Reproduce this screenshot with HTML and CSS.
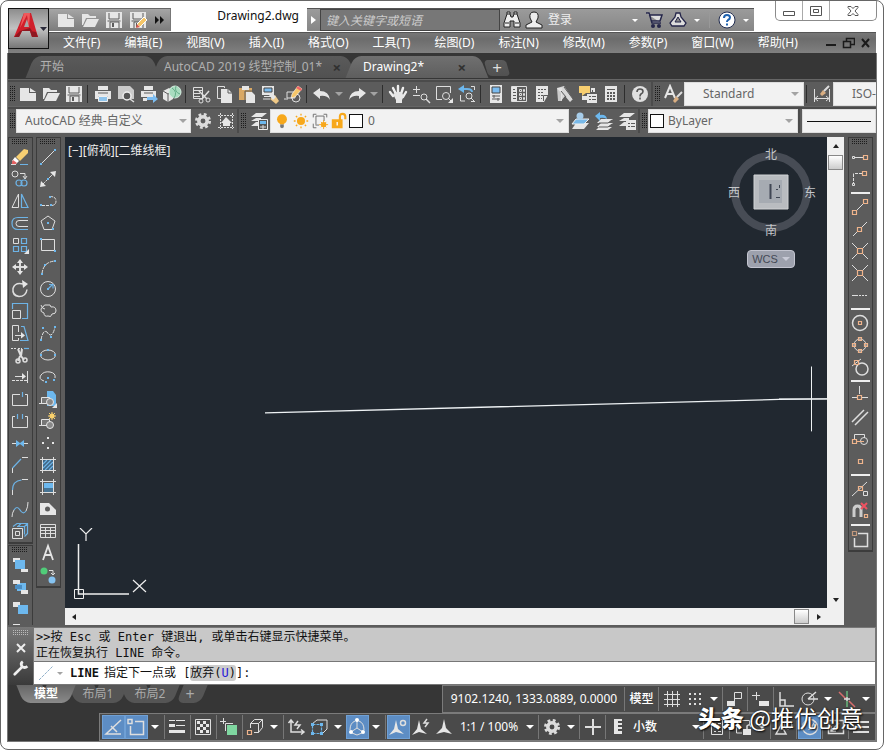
FILE: index.html
```html
<!DOCTYPE html>
<html lang="zh-CN">
<head>
<meta charset="utf-8">
<title>Drawing2.dwg</title>
<link rel="stylesheet" href="styles.css">
</head>
<body>
<svg class="defs" aria-hidden="true">
<defs>
<symbol id="new" viewBox="0 0 20 20"><path class="wf" d="M2 4h9v5h7v8H2z"/><path class="wf" d="M12 4l6 4h-6z"/></symbol>
<symbol id="open" viewBox="0 0 20 20"><path class="wf" d="M2 4h6l2 2h6v2H6L3 15H2z"/><path class="wf" d="M7 9h12l-4 8H3z"/></symbol>
<symbol id="save" viewBox="0 0 20 20"><path class="wf" d="M2 2h16v16H2z"/><path class="k" d="M5 3v6h10V3M3.500 11h13M6 18v-6h9v6"/><path class="kf" d="M8 13h2v4H8z"/></symbol>
<symbol id="saveas" viewBox="0 0 20 20"><use href="#save"/><path fill="#f5c669" stroke="#fff" d="M16 7l3 3-7 7-3-3z"/><path fill="#db5b4c" d="M9 14l3 3-4 1z"/></symbol>
<symbol id="more" viewBox="0 0 20 20"><path fill="#111" d="M6 6l4 4-4 4zM11 6l4 4-4 4z"/></symbol>
<symbol id="print" viewBox="0 0 20 20"><path class="wf" d="M5 2h10v4H5zM2 7h16v8h-3v-3H5v3H2z"/><path fill="#8fc4ec" stroke="#eee" d="M5.500 12.500h9v5h-9z"/><path class="k" d="M5 9h10"/></symbol>
<symbol id="preview" viewBox="0 0 20 20"><path class="wf" opacity=".8" d="M2 2h12l4 4v9H2z"/><circle cx="11" cy="12" r="4" fill="#555" stroke="#eee" stroke-width="1.500"/><path class="w15" d="M14 15l4 3"/></symbol>
<symbol id="plot" viewBox="0 0 20 20"><path class="wf" d="M5 2h9v4H5zM2 7h15v6H2zM4 14h4v3H4z"/><path class="k" d="M5 9h9"/><path fill="#7bbcf0" d="M8 13h6v-3l5 5-5 4v-3H8z"/></symbol>
<symbol id="share" viewBox="0 0 20 20"><path class="wf" d="M1 7l6-3 4 3v8l-5 3-5-3z"/><path class="k" d="M1 7l5 3 5-3M6 10v8"/><circle cx="13" cy="8" r="6" fill="#a9dcc0" stroke="#d8eee2"/><path d="M10 4q6 4 2 10M14 2q-2 6 4 8" fill="none" stroke="#64ad88"/></symbol>
<symbol id="cut" viewBox="0 0 20 20"><path class="w" d="M2.500 3.500h9v11h-9zM3 6.500h8M3 9.500h6M3 12.500h6"/><path class="w15" d="M8 7l8 8M18 7l-7 8"/><circle class="w" cx="17" cy="16" r="2"/><circle class="w" cx="10" cy="17" r="2"/></symbol>
<symbol id="copy" viewBox="0 0 20 20"><path class="w" d="M7 14.500H3.500v-12h7V4"/><path class="wf" d="M7 5h7l4 4v10H7z"/><path class="k" d="M14 5v4h4"/></symbol>
<symbol id="paste" viewBox="0 0 20 20"><path fill="#d9a864" d="M2 4h13v12H2z"/><path class="wf" d="M5 2h7v4H5zM9 8h6l3 3v8H9z"/><path class="k" d="M8 18V7h7"/></symbol>
<symbol id="match" viewBox="0 0 20 20"><path class="wf" d="M2 2h12v9H2z"/><path fill="#7bbcf0" stroke="#444" d="M4 4h8v4H4z"/><path class="wf" d="M4 12h7v1H4z"/><path class="w" d="M3 15h7"/><path fill="#f0c987" d="M10 15l5-4 4 6-3 3z"/><path class="wf" d="M9 11l3-2 4 4-3 3z"/></symbol>
<symbol id="blockedit" viewBox="0 0 20 20"><path class="w" d="M4 8h8v6H4zM1 15h4"/><circle class="w" cx="13" cy="14" r="4"/><path fill="#f5c669" stroke="#fff" stroke-width=".6" d="M15 2l4 3-7 8-4 1 1-4z"/><path fill="#e66" d="M15 2l4 3-1 2-5-3z"/></symbol>
<symbol id="undo" viewBox="0 0 20 20"><path class="wf" d="M1 9l7-5v3q9 0 10 9-3-5-10-4v3z"/></symbol>
<symbol id="redo" viewBox="0 0 20 20"><path class="wf" d="M19 9l-7-5v3Q3 7 2 16q3-5 10-4v3z"/></symbol>
<symbol id="pan" viewBox="0 0 20 20"><path d="M5 12L2 8M8 10L5 4M10 9V2M13 10l2-6M15 13l3-5" fill="none" stroke="#eee" stroke-width="2.400" stroke-linecap="round"/><path class="wf" d="M5 10l4-2h4l3 4-2 4v3H8v-3z"/></symbol>
<symbol id="zoom" viewBox="0 0 20 20"><path class="w" d="M2 5.500h7M5.500 2v7M2 11.500h7"/><circle class="w" cx="13" cy="13" r="3"/><path class="w15" d="M15 15l4 4"/></symbol>
<symbol id="zoomwin" viewBox="0 0 20 20"><path class="w" d="M8 15.500H2.500v-13h14V9"/><circle class="w" cx="12" cy="12" r="3.500"/><path class="w" d="M14 14l3 3"/><path class="wf" d="M19 14v5h-5z"/></symbol>
<symbol id="zoomprev" viewBox="0 0 20 20"><path class="b2" d="M3 5h7q5 0 5 3"/><path class="bf" d="M1 5l6-4v8z"/><path class="w" d="M14 2.500h3.500V6M3.500 11v6H8M14 17.500h4"/><circle class="w" cx="12" cy="12" r="3"/><path class="w" d="M14 14l4 4"/></symbol>
<symbol id="props" viewBox="0 0 20 20"><path class="wf" d="M4 1h12v18H4z"/><path fill="#7bbcf0" stroke="#444" d="M6 3h8v6H6z"/><path class="k" d="M6 12h8M6 15h8M8 11v3M12 14v3"/></symbol>
<symbol id="dcenter" viewBox="0 0 20 20"><path class="w" d="M2.500 2.500h15v15h-15z"/><path class="wf" d="M3 3h5v14H3z"/><path class="k" d="M4 5.500h2M4 8.500h3M4 11.500h3M4 14.500h3"/><path class="w" d="M10.500 5.500h2v2h-2zM14.500 5.500h1v2h-1zM10.500 9.500h2v2h-2zM14.500 9.500h1v2h-1zM10.500 13.500h2v2h-2zM14.500 13.500h1v2h-1z"/></symbol>
<symbol id="palette" viewBox="0 0 20 20"><path class="wf" d="M4 2h12v9l-4 7H4z"/><path class="k" stroke-dasharray="2 1" d="M6 5.500h8M6 8.500h5M6 11.500h5M6 14.500h4"/><path class="k" d="M11.500 17V11.500H16"/></symbol>
<symbol id="sheets" viewBox="0 0 20 20"><path class="wf" d="M2 4l7-2 9 13-3 3-5-6-4 5V9z" opacity=".9"/><path class="wf" d="M2 4h5v13H3z" opacity=".8"/><path class="k" d="M9 3l9 12M6 7l5 6"/></symbol>
<symbol id="markup" viewBox="0 0 20 20"><path fill="#f7ce70" d="M1 2h11v7H8l-4 3V9H1z"/><path class="wf" d="M13 4h4v4h-4zM4 12h5v4H4zM9 10h10v9H9z"/><path class="k" d="M11 12.500h2M14 12.500h4M11 15.500h2M14 15.500h4M14.500 9v-3"/></symbol>
<symbol id="calc" viewBox="0 0 20 20"><path class="wf" d="M4 2h12v16H4z"/><path class="k" d="M6 5.500h8"/><path class="k" stroke-width="2" stroke-dasharray="2 1" d="M6 9h8M6 12h8M6 15h8"/></symbol>
<symbol id="help" viewBox="0 0 20 20"><circle cx="10" cy="10" r="8" fill="#e0e0e0"/><path d="M7 8q0-3 3-3t3 2.500q0 1.500-2 2.500-1 .7-1 2.500M10 13.500v2" fill="none" stroke="#555" stroke-width="1.600"/></symbol>
<symbol id="textstyle" viewBox="0 0 20 20"><path d="M2 14L7 2l5 12M4 10h6" fill="none" stroke="#e5e5e5" stroke-width="2"/><path fill="#d9ae82" d="M10 17l3-5 3 3-4 4z"/><path class="w2" d="M14 13l5-5"/></symbol>
<symbol id="dimstyle" viewBox="0 0 20 20"><path class="w" d="M2.500 5v13M17.500 5v13M3 14.500h14M6 12l-3 2.500 3 2.500M14 12l3 2.500-3 2.500"/><path fill="#d9ae82" d="M8 10l3-4 3 3-4 3z"/><path class="w2" d="M12 7l5-5"/></symbol>
<symbol id="gear" viewBox="0 0 20 20"><circle cx="10" cy="10" r="6.500" fill="none" stroke="#dcdcdc" stroke-width="3" stroke-dasharray="2.700 2.400"/><circle cx="10" cy="10" r="4.200" fill="none" stroke="#dcdcdc" stroke-width="3.500"/></symbol>
<symbol id="myws" viewBox="0 0 20 20"><path class="w" stroke-dasharray="2 1" d="M2 4.500h16M2 16.500h16M4.500 2v16M16.500 2v16"/><path class="wf" d="M5 12l5-6 6 6h-2v3H7v-3z"/></symbol>
<symbol id="layers" viewBox="0 0 20 20"><path class="wf" d="M7 2h11l-5 4H2zM7 7h5v3H2zM7 11h3v4H2z"/><path fill="#555" stroke="#eee" d="M9.500 8.500h9v10h-9z"/><path class="bf" d="M11 10h6v3h-6z"/><path class="w" d="M11 16h6M14 14v4"/></symbol>
<symbol id="bulb" viewBox="0 0 20 20"><circle cx="10" cy="8" r="5.500" fill="#f7a81b"/><path fill="#f7a81b" d="M7 11h6l-1 3H8z"/><path fill="#777" d="M8 14h4v3l-2 1-2-1z"/></symbol>
<symbol id="sun" viewBox="0 0 20 20"><circle cx="10" cy="10" r="4.500" fill="#f7a81b"/><path stroke="#f7a81b" stroke-width="1.500" d="M10 2v2M10 16v2M2 10h2M16 10h2M4.300 4.300l1.500 1.500M14.200 14.200l1.500 1.500M4.300 15.700l1.500-1.500M14.200 5.800l1.500-1.500"/></symbol>
<symbol id="vpfreeze" viewBox="0 0 20 20"><path fill="none" stroke="#666" d="M5.500 14V4.500h9V10M5 14.500h4M2.500 6V2.500H6M14 2.500h3.500V6M2.500 13v4.500H6"/><circle cx="14" cy="14" r="3" fill="#f7a81b"/><path stroke="#f7a81b" d="M14 9v10M9 14h10M11 11l6 6M17 11l-6 6"/></symbol>
<symbol id="lock" viewBox="0 0 20 20"><path fill="#f7a81b" d="M2 8h12v10H2z"/><path fill="none" stroke="#f7a81b" stroke-width="2.400" d="M11 9V5q0-3 3-3t3 3v3"/><path stroke="#fff" stroke-width="1.500" d="M8 11v4"/></symbol>
<symbol id="laycur" viewBox="0 0 20 20"><path class="wf" d="M5 12h13l-5 6H1z"/><path fill="#79b9e8" stroke="#eee" d="M5 8h13l-5 5H1z"/><circle cx="9" cy="5" r="3.500" fill="#a7cdea"/></symbol>
<symbol id="layprev" viewBox="0 0 20 20"><path class="wf" d="M7 8h12l-5 4H3zM7 12h12l-5 4H3zM5 16h13l-4 3H2z"/><path class="k" d="M5 12h9l4-3M5 16h9l4-3"/><path class="bf" d="M1 5l5-4v3q6-1 7 4-4-2-7-1v3z"/></symbol>
<symbol id="laystate" viewBox="0 0 20 20"><path class="wf" d="M7 2h11l-5 4H2zM7 7h5v3H2zM7 11h3v4H2zM9 9h10v10H9z"/><path class="k" d="M11 12.500h2M14 12.500h4M11 15.500h2M14 15.500h4"/></symbol>
<symbol id="erase" viewBox="0 0 20 20"><path class="b" d="M10 17.500h8"/><path fill="#fff" d="M5 10l4 4-3 3-4-3z"/><path fill="#f7cf72" d="M14 2l4 1v3l-8 8-4-4z"/><path fill="#e46162" d="M3 13l4 3-3 2H2v-3z"/><path class="w" d="M1 17.500h5"/></symbol>
<symbol id="mcopy" viewBox="0 0 20 20"><circle class="w" cx="5" cy="5" r="3"/><path class="w" d="M10 4.500h5V9M13 7l2 3 2-3"/><circle class="b" cx="9" cy="14" r="3"/><circle class="b" cx="14" cy="14" r="3"/></symbol>
<symbol id="mirror" viewBox="0 0 20 20"><path class="w" d="M8.500 3v13.500H2z"/><path class="b" d="M11.500 3v13.500H18z"/></symbol>
<symbol id="offset" viewBox="0 0 20 20"><path class="b" d="M18 4.500H8q-6 0-6 6t6 6h10"/><path class="w" d="M18 7.500H9q-3 0-3 3t3 3h9"/></symbol>
<symbol id="array" viewBox="0 0 20 20"><path class="w" d="M3.500 3.500h5v5h-5z"/><path class="b" d="M11.500 3.500h5v5h-5zM3.500 11.500h5v5h-5zM11.500 11.500h5v5h-5z"/><path class="wf" d="M19 14v5h-5z"/></symbol>
<symbol id="move" viewBox="0 0 20 20"><path class="w2" d="M10 4v12M4 10h12"/><path class="wf" d="M10 2l3 4H7zM10 18l3-4H7zM2 10l4-3v6zM18 10l-4-3v6z"/></symbol>
<symbol id="rotate" viewBox="0 0 20 20"><path class="w15" d="M13 5Q5 3 3 9.500q-1 7 6 8 7 0 8-7"/><path class="wf" d="M12 1l6 4-5 4z"/></symbol>
<symbol id="scale" viewBox="0 0 20 20"><path class="b" d="M2.500 8V2.500h15v15H12"/><path class="w" d="M2.500 9.500h8v8h-8z"/></symbol>
<symbol id="stretch" viewBox="0 0 20 20"><path class="w" d="M8.500 9V2.500h-6v15h6V15M5 12.500h7"/><path class="wf" d="M11 9l4 3.500-4 3z"/><path class="b" d="M11 3.500h3l4 14H10"/></symbol>
<symbol id="trim" viewBox="0 0 20 20"><path class="w" d="M1 3.500h5M8 3.500h4" stroke-dasharray="2 1"/><path class="b" d="M14 3.500h5"/><path class="w2" d="M8 4l3 7M12 4l-1 7 3 4M10 11l-2 5"/><circle class="w15" cx="15" cy="15" r="2"/><circle class="w15" cx="8" cy="16" r="2"/></symbol>
<symbol id="extend" viewBox="0 0 20 20"><path class="w" d="M17.500 4v12M5 9.500h9"/><path class="wf" d="M12 6l4 3.500-4 3z"/><path class="w" stroke-dasharray="3 1" d="M2 13.500h15"/></symbol>
<symbol id="breakpt" viewBox="0 0 20 20"><path class="w" d="M10 5.500H2.500v11h15v-11H15"/><path class="b" d="M12.500 3v5"/></symbol>
<symbol id="break" viewBox="0 0 20 20"><path class="w" d="M5 5.500H2.500v11h15v-11H15"/><path class="b" d="M7.500 3v5M12.500 3v5"/></symbol>
<symbol id="join" viewBox="0 0 20 20"><path class="w" d="M2 10.500h4M14 10.500h4"/><path class="bf" d="M6 7l4 3 4-3v7l-4-3-4 3z"/></symbol>
<symbol id="chamfer" viewBox="0 0 20 20"><path class="w" d="M2.500 18v-5M12 2.500h6"/><path class="b" d="M2.500 13L11 4"/></symbol>
<symbol id="fillet" viewBox="0 0 20 20"><path class="w" d="M2.500 18v-5M12 2.500h6"/><path class="b" d="M2.500 13q0-9 9-10"/></symbol>
<symbol id="blend" viewBox="0 0 20 20"><path class="w" d="M2 18q0-4 2-7M18 3q0 5-2 9"/><path class="b" d="M4 11q3-5 6 0t6 1"/></symbol>
<symbol id="explode" viewBox="0 0 20 20"><path class="w" d="M2.500 7.500h10v10h-10z"/><path class="w" d="M5.500 10.500h4v4h-4z"/><path class="b" d="M3 5.500l4-3h10.500v10l-3 3M7 5.500h8M14.500 5.500v8M14.500 5.500l3-3M8 5.500l3-3"/></symbol>
<symbol id="ord1" viewBox="0 0 20 20"><path class="wf" d="M3 3h7v4H3zM11 14h7v3h-7z"/><path class="bf" d="M5 5h10v9H5z"/></symbol>
<symbol id="ord2" viewBox="0 0 20 20"><path class="bf" d="M7 6h9v8H7z"/><path class="wf" d="M3 3h7v4H3zM11 13h7v4h-7z"/><path fill="#4a8dc3" d="M5 8h7v4H5z"/></symbol>
<symbol id="ord3" viewBox="0 0 20 20"><path class="wf" d="M3 3h7v5H3z"/><path class="bf" d="M8 6h10v9H8z"/></symbol>
<symbol id="line" viewBox="0 0 20 20"><path class="w" d="M3 17L17 3"/><path class="bf" d="M2 16h2v2H2zM16 2h2v2h-2z"/></symbol>
<symbol id="xline" viewBox="0 0 20 20"><path class="w" stroke-dasharray="4 1" d="M4 16L16 4"/><path class="wf" d="M2 18l1-6 5 5zM18 2l-6 1 5 5z"/><path class="bf" d="M9 9h2v2H9z"/></symbol>
<symbol id="pline" viewBox="0 0 20 20"><path class="w" stroke-dasharray="3 1" d="M4 14.500h8M12 5.500q6 0 6 4.500t-5 4.500"/><path class="bf" d="M2 13h2v2H2zM12 13h2v2h-2zM11 5h2v2h-2z"/></symbol>
<symbol id="polygon" viewBox="0 0 20 20"><path class="w" d="M10 3l7 5-3 8.500H6L3 8z"/><path class="bf" d="M9 9h2v2H9zM14 15h2v2h-2z"/></symbol>
<symbol id="rect" viewBox="0 0 20 20"><path class="w" d="M3.500 4.500h13v11h-13z"/><path class="bf" d="M2 3h2v2H2zM16 15h2v2h-2z"/></symbol>
<symbol id="arc" viewBox="0 0 20 20"><path class="w" stroke-dasharray="4 1" d="M4 17Q5 5 17 4"/><path class="bf" d="M3 16h2v2H3zM6 7h2v2H6zM16 3h2v2h-2z"/></symbol>
<symbol id="circle" viewBox="0 0 20 20"><circle class="w" cx="10" cy="10" r="7.500"/><path class="b" d="M10 10l4-4M11 5.500h4v4"/><path class="bf" d="M9 9h2v2H9z"/></symbol>
<symbol id="cloud" viewBox="0 0 20 20"><path class="w" d="M5 6q1-3 4-2 4-1 4 2 5-1 5 4 0 3-4 3-1 4-4 2-4 1-4-3-4-1-3-4 1-2 2-2zM3 4q1 4 4 4"/></symbol>
<symbol id="spline" viewBox="0 0 20 20"><path class="w" stroke-dasharray="4 1" d="M3 17q2-11 6-8 5 8 8-5"/><path class="bf" d="M2 16h2v2H2zM4 4h2v2H4zM12 13h2v2h-2zM16 3h2v2h-2z"/></symbol>
<symbol id="ellipse" viewBox="0 0 20 20"><ellipse class="w" cx="10" cy="10" rx="7.500" ry="5"/><path class="bf" d="M2 9h2v2H2zM9 4h2v2H9zM16 9h2v2h-2z"/></symbol>
<symbol id="earc" viewBox="0 0 20 20"><path class="w" d="M6 14q-6-2-3-6t9-3q6 1 5 6"/><path class="bf" d="M9 10h2v2H9zM7 14h2v2H7zM15 12h2v2h-2z"/></symbol>
<symbol id="insert" viewBox="0 0 20 20"><path class="bf" d="M9 2h6l3 4v11H9z"/><path fill="#777" stroke="#e5e5e5" d="M3.500 8.500h8v6h-8z"/><circle cx="12" cy="13" r="3.500" fill="#888" stroke="#e5e5e5"/><path class="w" d="M1 14.500h4"/><path class="wf" d="M19 14v5h-5z"/></symbol>
<symbol id="block" viewBox="0 0 20 20"><path fill="#777" stroke="#e5e5e5" d="M3.500 8.500h8v6h-8z"/><circle cx="12" cy="14" r="3.500" fill="#888" stroke="#e5e5e5"/><path class="w" d="M1 14.500h4"/><circle cx="14" cy="5" r="2.500" fill="#f9d16c"/><path stroke="#f9d16c" d="M14 1v8M10 5h8M11 2l6 6M17 2l-6 6"/></symbol>
<symbol id="point" viewBox="0 0 20 20"><path class="wf" d="M9 4h2v2H9zM4 9h2v2H4zM14 9h2v2h-2zM9 14h2v2H9z"/></symbol>
<symbol id="hatch" viewBox="0 0 20 20"><path fill="#3f6584" d="M5 5h10v10H5z"/><path class="b" d="M5 9l4-4M5 13l8-8M7 15l8-8M11 15l4-4"/><path class="w" d="M2 4.500h16M2 15.500h16M4.500 2v16M15.500 2v16"/></symbol>
<symbol id="gradient" viewBox="0 0 20 20"><path class="bf" d="M6 6h9v6H6z"/><path fill="#477494" d="M6 11h9v4H6z"/><path class="w" d="M2 4.500h16M2 15.500h16M4.500 2v16M15.500 2v16"/></symbol>
<symbol id="region" viewBox="0 0 20 20"><path class="wf" fill-rule="evenodd" d="M2 4h9l7 7v5H2zM7 10a2.500 2.500 0 1 0 5 0 2.500 2.500 0 1 0-5 0z"/></symbol>
<symbol id="table" viewBox="0 0 20 20"><path class="w" d="M2.500 3.500h15v13h-15zM3 6.500h14M3 9.500h14M3 12.500h14M7.500 7v9M12.500 7v9"/></symbol>
<symbol id="mtext" viewBox="0 0 20 20"><path d="M5 17l5-14 5 14M7 12h6" fill="none" stroke="#e5e5e5" stroke-width="1.800"/></symbol>
<symbol id="addsel" viewBox="0 0 20 20"><circle cx="6" cy="6" r="3.500" fill="#50cc79"/><circle cx="14" cy="15" r="3.500" fill="#86c3f1"/><path class="w" d="M11 5.500h4V9M13 8l2 2 2-2"/></symbol>
<symbol id="s1" viewBox="0 0 20 20"><path class="w" d="M5 10.500h8M2.500 9.500h2v2h-2z"/><path class="o" d="M13.500 8.500h4v4h-4z"/></symbol>
<symbol id="s2" viewBox="0 0 20 20"><path class="w" d="M12 4.500H3.500M3.500 5v9" stroke-dasharray="3 1"/><path class="w" d="M2.500 14.500h2v2h-2z"/><path class="o" d="M12.500 2.500h4v4h-4z"/></symbol>
<symbol id="s3" viewBox="0 0 20 20"><path class="w" d="M7 13l6-6"/><path class="o" d="M2.500 13.500h4v4h-4zM13.500 2.500h4v4h-4z"/></symbol>
<symbol id="s4" viewBox="0 0 20 20"><path class="w" d="M3 17l5-5M12 8l5-5"/><path class="o" d="M7.500 8.500h4v4h-4z"/></symbol>
<symbol id="s5" viewBox="0 0 20 20"><path class="w" d="M2 18l6-6M12 8l6-6M2 2l6 6M12 12l6 6"/><path class="o" d="M7.500 7.500h5v5h-5z"/></symbol>
<symbol id="s6" viewBox="0 0 20 20"><path class="w" d="M2 10.500h6"/><path class="w" stroke-dasharray="2 1" d="M9 10.500h9"/></symbol>
<symbol id="s7" viewBox="0 0 20 20"><circle class="w15" cx="10" cy="10" r="7.500"/><path class="o" d="M8.500 8.500h3v3h-3z"/></symbol>
<symbol id="s8" viewBox="0 0 20 20"><circle class="w" cx="10" cy="10" r="6"/><path class="o" d="M8.500 2.500h3v3h-3zM8.500 14.500h3v3h-3zM2.500 8.500h3v3h-3zM14.500 8.500h3v3h-3z"/></symbol>
<symbol id="s9" viewBox="0 0 20 20"><circle class="w15" cx="12" cy="12" r="6"/><path class="w" d="M2 9l9-7"/><path class="o" d="M4.500 3.500h4v4h-4z"/></symbol>
<symbol id="s10" viewBox="0 0 20 20"><path class="w" d="M9.500 1v8M2 12.500h5M12 12.500h6"/><path class="o" d="M7.500 10.500h4v4h-4z"/></symbol>
<symbol id="s11" viewBox="0 0 20 20"><path class="w15" d="M2 15L14 3M5 18L18 5"/></symbol>
<symbol id="s12" viewBox="0 0 20 20"><path class="w" d="M4.500 10V5.500h10V9"/><circle class="w" cx="14" cy="12" r="3.500"/><path class="o" d="M2.500 10.500h4v4h-4zM7 12.500h7"/></symbol>
<symbol id="s13" viewBox="0 0 20 20"><path class="o" d="M8.500 8.500h4v4h-4z"/></symbol>
<symbol id="s14" viewBox="0 0 20 20"><path class="w" d="M2 17L17 3M13.500 12.500h4v4h-4z"/><path class="o" d="M8.500 7.500h4v4h-4z"/></symbol>
<symbol id="s15" viewBox="0 0 20 20"><path d="M4 16V9q0-4 3.500-4T11 9v7" fill="none" stroke="#ccc" stroke-width="3"/><path stroke="#ef5261" stroke-width="2" d="M11 2l6 6M17 2l-6 6"/><path class="o" d="M14.500 13.500h3v3h-3z"/></symbol>
<symbol id="s16" viewBox="0 0 20 20"><path class="w15" d="M8 4.500h9.500v13h-13V9"/><path class="o" opacity=".7" d="M2.500 2.500h4v4h-4z"/></symbol>
<symbol id="infer" viewBox="0 0 20 20"><path class="w15" d="M18 3L3 17h15M8 9l6 6"/></symbol>
<symbol id="osnap" viewBox="0 0 20 20"><path class="w15" d="M9 4.500h8.500v13h-13V9"/><path class="w15" d="M2 2.500h4v4H2z"/></symbol>
<symbol id="lweight" viewBox="0 0 20 20"><path class="wf" d="M2 3h6v1H2zM9 3h9v1H9zM2 7h6v3H2zM9 8h9v1H9zM2 13h16v3H2z"/></symbol>
<symbol id="transp" viewBox="0 0 20 20"><path class="w" d="M2.500 2.500h15v15h-15z"/><path class="wf" d="M4 4h3v3H4zM10 4h3v3h-3zM7 7h3v3H7zM13 7h3v3h-3zM4 10h3v3H4zM10 10h3v3h-3zM7 13h3v3H7zM13 13h3v3h-3z"/></symbol>
<symbol id="selcyc" viewBox="0 0 20 20"><path class="w" d="M1 4.500h6M4.500 1v6"/><path fill="#7fd6a0" d="M8 8h10v10H8z"/><path class="w" d="M6.500 14V6.500H14"/></symbol>
<symbol id="box3d" viewBox="0 0 20 20"><path class="w" d="M5.500 11V6.500l4-4h8v8l-4 5H9M5.500 6.500h8v9M13.500 6.500l4-4"/><path class="o" d="M2.500 13.500h4v4h-4z"/></symbol>
<symbol id="ducs" viewBox="0 0 20 20"><path class="w15" d="M5 3v12h13M2.500 6L5 3l2.500 3M15 12.500l3 2.500-3 2.500M12 4l-3 4h5l-3 4"/></symbol>
<symbol id="filter" viewBox="0 0 20 20"><path class="w" d="M3 7l5-4h10v9l-5 5"/><path class="b" stroke-dasharray="3 1" d="M3.500 7.500h9v9h-9z"/><path class="bf" d="M2 6h3v3H2zM11 6h3v3h-3zM2 15h3v3H2zM11 15h3v3h-3z"/></symbol>
<symbol id="gizmo" viewBox="0 0 20 20"><path class="w" d="M10 3v8l-6 4M10 11l6 4M8 4Q3 6 3 13M12 4q5 2 5 9M5 16l5 2 5-2"/><circle cx="10" cy="3" r="2" fill="#fff"/><circle cx="4" cy="15" r="2" fill="#fff"/><circle cx="16" cy="15" r="2" fill="#fff"/></symbol>
<symbol id="annovis" viewBox="0 0 20 20"><path class="wf" d="M8 3l2 9 6 5-8-2-7 3 5-6z"/><circle class="w15" cx="15" cy="6" r="2.500"/></symbol>
<symbol id="annoauto" viewBox="0 0 20 20"><path class="wf" d="M8 3l2 9 6 5-8-2-7 3 5-6z"/><path class="w15" d="M16 2l-3 4h4l-3 4"/></symbol>
<symbol id="anno" viewBox="0 0 20 20"><path class="wf" d="M10 2l2 9 6 6-8-2-8 2 6-6z"/></symbol>
<symbol id="plus" viewBox="0 0 20 20"><path class="w2" d="M10 2v16M2 10h16"/></symbol>
<symbol id="ruler" viewBox="0 0 20 20"><path class="wf" d="M6 2h8v2h-4v2h4v2h-4v2h4v2h-4v2h4v3H6z"/></symbol>
<symbol id="qprops" viewBox="0 0 20 20"><path class="w" d="M4.500 2.500h11v15h-11zM7 6.500h2M11 6.500h3M7 10.500h2M11 10.500h3M7 14.500h2M11 14.500h3"/></symbol>
<symbol id="uilock" viewBox="0 0 20 20"><path class="w" d="M3.500 3.500h13V8M3.500 4v12H9"/><path class="wf" d="M10 12h8v6h-8z"/><path class="w15" d="M14 12V9q3-3 4 1"/></symbol>
<symbol id="isolate" viewBox="0 0 20 20"><path class="w15" d="M2 17l5-9 5 9z"/><circle class="w" cx="14" cy="8" r="4"/></symbol>
<symbol id="hwacc" viewBox="0 0 20 20"><circle class="w15" cx="10" cy="10" r="7.500"/><path class="wf" d="M15 4l-3 9H8z"/></symbol>
<symbol id="clean" viewBox="0 0 20 20"><path class="w15" d="M2.500 3.500h15v13h-15zM5 14l8-8M5 9v5h5"/></symbol>
<symbol id="menu" viewBox="0 0 20 20"><path class="w2" d="M2 5h16M2 10h16M2 15h16"/></symbol>
<symbol id="grid" viewBox="0 0 20 20"><path class="w" d="M5.500 2v16M10.500 2v16M15.500 2v16M2 5.500h16M2 10.500h16M2 15.500h16"/></symbol>
<symbol id="snap" viewBox="0 0 20 20"><path class="w2" stroke-dasharray="2 3" d="M4 5h12M4 10h12M4 15h12"/></symbol>
<symbol id="dyn" viewBox="0 0 20 20"><path class="w" d="M9.500 17V3.500h7v6h-7"/><path class="wf" d="M2 12h7v5H2z"/></symbol>
<symbol id="dinput" viewBox="0 0 20 20"><path class="w" d="M2 6.500h8M6.500 3v8"/><path class="wf" d="M9 12h10v5H9z"/></symbol>
<symbol id="ortho" viewBox="0 0 20 20"><path class="w15" d="M4 3v14h14M4 11h5v6"/></symbol>
<symbol id="polar" viewBox="0 0 20 20"><circle class="w" cx="9" cy="10" r="6"/><path class="w15" d="M9 10l8-7M9 10h10"/></symbol>
<symbol id="iso" viewBox="0 0 20 20"><path stroke="#d56d6d" stroke-width="1.500" d="M2 3l7 7M12 12l6 6"/><path stroke="#68b77c" stroke-width="1.500" d="M10 2v6M10 12v6"/><path class="w15" d="M7 10h6M10 8v4"/></symbol>
<symbol id="find" viewBox="0 0 20 20"><path fill="#eee" stroke="#222" d="M5 4h3l1 3h2l1-3h3l3 9v4h-6v-6H8v6H2v-4zM5 4V2h3v2M12 4V2h3v2M3 13h4M13 13h4"/></symbol>
<symbol id="user" viewBox="0 0 20 20"><path fill="#eee" stroke="#222" d="M10 2q5 0 4 6l-2 4 6 3v3H2v-3l6-3-2-4Q5 2 10 2z"/></symbol>
<symbol id="cart" viewBox="0 0 20 20"><path fill="#ddd" stroke="#25264a" stroke-width="1.500" d="M2 3h3l3 10h9M6 5h12l-2 6H8"/><circle cx="9" cy="16" r="2" fill="#25264a"/><circle cx="15" cy="16" r="2" fill="#25264a"/></symbol>
<symbol id="a360" viewBox="0 0 20 20"><path fill="#ddd" stroke="#25264a" stroke-width="1.300" d="M8 3h4l1 4 5 6-2 3H4l-2-3 5-6z"/><path fill="#8a8a8a" stroke="#25264a" d="M10 7l-3 5h6z"/></symbol>
<symbol id="helpblue" viewBox="0 0 20 20"><circle cx="10" cy="10" r="8" fill="#fff" stroke="#222d50"/><path d="M7 8q0-3 3-3t3 2.500q0 1.500-2 2.500-1 .7-1 2M10 13.500v2" fill="none" stroke="#2062ae" stroke-width="2"/></symbol>
<symbol id="wrench" viewBox="0 0 20 20"><path d="M3 17l8-8" fill="none" stroke="#eee" stroke-width="3" stroke-linecap="round"/><path d="M12 3q-3 2-1 5 3 3 6 0" fill="none" stroke="#eee" stroke-width="3"/></symbol>
</defs>
</svg>
<div class="frame">
  <div class="winbtns">
    <button aria-label="最小化"><svg width="16" height="12"><path d="M2.500 6.500h11v4h-11z" fill="#fff" stroke="#555"/></svg></button>
    <button aria-label="最大化"><svg width="14" height="12"><path d="M1.500 1.500h11v9h-11zM4.500 4.500h5v3h-5z" fill="#fff" stroke="#555"/></svg></button>
    <button aria-label="关闭" class="wide"><svg width="14" height="12"><path d="M2 1.500h3l2 2 2-2h3v1L9 6l3 3.500v1H9l-2-2-2 2H2v-1L5 6 2 2.500z" fill="#fff" stroke="#555"/></svg></button>
  </div>
  <header class="head">
    <button class="appbtn" aria-label="应用程序菜单"><svg width="38" height="38" viewBox="0 0 38 38"><path fill="#d01f2b" d="M4 27L14 3h7l7 24h-6l-2-6h-8l-3 6z"/><path fill="#f0595c" d="M14 3l-4 15 7-13 2 13 1-15z"/><path fill="#8f1720" d="M4 27l6-6 10-3 2 3H12l-3 6zM20 21l6 1 2 5h-6z"/><path fill="#aaa" d="M14 17l3-8 2 8z"/><path fill="#2a2a3a" d="M30 17h7l-3.500 4z"/></svg></button>
    <div class="title">
      <div class="qat">
        <button aria-label="新建"><svg class="ic"><use href="#new"/></svg></button>
        <button aria-label="打开"><svg class="ic"><use href="#open"/></svg></button>
        <button aria-label="保存"><svg class="ic"><use href="#save"/></svg></button>
        <button aria-label="另存为"><svg class="ic"><use href="#saveas"/></svg></button>
        <button aria-label="更多"><svg class="ic"><use href="#more"/></svg></button>
      </div>
      <h1>Drawing2.dwg</h1>
      <div class="info">
        <button class="exp" aria-label="展开"><i class="car right"></i></button>
        <input type="text" class="search" placeholder="键入关键字或短语" aria-label="搜索">
        <button aria-label="查找"><svg class="ic"><use href="#find"/></svg></button>
        <button class="login"><svg class="ic"><use href="#user"/></svg>登录</button>
        <button class="tiny" aria-label="登录选项"><i class="car"></i></button>
        <button aria-label="商店"><svg class="ic"><use href="#cart"/></svg></button>
        <button aria-label="A360"><svg class="ic"><use href="#a360"/></svg></button>
        <button class="tiny" aria-label="A360 选项"><i class="car"></i></button>
        <span class="bar"></span>
        <button aria-label="帮助"><svg class="ic"><use href="#helpblue"/></svg></button>
        <button class="tiny" aria-label="帮助选项"><i class="car"></i></button>
      </div>
    </div>
    <nav class="menu">
      <a href="#">文件(F)</a><a href="#">编辑(E)</a><a href="#">视图(V)</a><a href="#">插入(I)</a><a href="#">格式(O)</a><a href="#">工具(T)</a><a href="#">绘图(D)</a><a href="#">标注(N)</a><a href="#">修改(M)</a><a href="#">参数(P)</a><a href="#">窗口(W)</a><a href="#">帮助(H)</a>
      <div class="mdi">
        <button aria-label="最小化图形"><svg width="12" height="12"><path d="M1 8h10" stroke="#1b1b1b" stroke-width="2"/></svg></button>
        <button aria-label="还原图形"><svg width="13" height="12"><path d="M4.500 4V1.500h8v6H9M1.500 4.500h7v6h-7z" fill="none" stroke="#1b1b1b" stroke-width="1.500"/></svg></button>
        <button aria-label="关闭图形"><svg width="12" height="12"><path d="M2 2l7 8M9 2l-7 8" stroke="#1b1b1b" stroke-width="2"/></svg></button>
      </div>
    </nav>
  </header>
  <div class="app">
    <div class="tabs">
      <button class="tab start"><span>开始</span></button>
      <button class="tab doc"><span>AutoCAD 2019 线型控制_01*</span><b>×</b></button>
      <button class="tab cur"><span>Drawing2*</span><b>×</b></button>
      <button class="tab add" aria-label="新图形"><span>+</span></button>
    </div>
    <div class="row">
      <div class="bx">
        <i class="grip"></i>
        <button aria-label="新建"><svg class="ic"><use href="#new"/></svg></button><button aria-label="打开"><svg class="ic"><use href="#open"/></svg></button><button aria-label="保存"><svg class="ic"><use href="#save"/></svg></button><i class="sep"></i>
        <button aria-label="打印"><svg class="ic"><use href="#print"/></svg></button><button aria-label="打印预览"><svg class="ic"><use href="#preview"/></svg></button><button aria-label="发布"><svg class="ic"><use href="#plot"/></svg></button><button aria-label="三维打印"><svg class="ic"><use href="#share"/></svg></button><i class="sep"></i>
        <button aria-label="剪切"><svg class="ic"><use href="#cut"/></svg></button><button aria-label="复制"><svg class="ic"><use href="#copy"/></svg></button><button aria-label="粘贴"><svg class="ic"><use href="#paste"/></svg></button><button aria-label="特性匹配"><svg class="ic"><use href="#match"/></svg></button><button aria-label="块编辑器"><svg class="ic"><use href="#blockedit"/></svg></button><i class="sep"></i>
        <button aria-label="放弃"><svg class="ic"><use href="#undo"/></svg></button><button class="tiny" aria-label="放弃列表"><i class="car dim"></i></button><button aria-label="重做"><svg class="ic"><use href="#redo"/></svg></button><button class="tiny" aria-label="重做列表"><i class="car dim"></i></button><i class="sep"></i>
        <button aria-label="平移"><svg class="ic"><use href="#pan"/></svg></button><button aria-label="实时缩放"><svg class="ic"><use href="#zoom"/></svg></button><button aria-label="窗口缩放"><svg class="ic"><use href="#zoomwin"/></svg></button><button aria-label="缩放上一个"><svg class="ic"><use href="#zoomprev"/></svg></button><i class="sep"></i>
        <button aria-label="特性"><svg class="ic"><use href="#props"/></svg></button><button aria-label="设计中心"><svg class="ic"><use href="#dcenter"/></svg></button><button aria-label="工具选项板"><svg class="ic"><use href="#palette"/></svg></button><button aria-label="图纸集"><svg class="ic"><use href="#sheets"/></svg></button><button aria-label="标记集"><svg class="ic"><use href="#markup"/></svg></button><button aria-label="计算器"><svg class="ic"><use href="#calc"/></svg></button><i class="sep"></i>
        <button aria-label="帮助"><svg class="ic"><use href="#help"/></svg></button>
      </div>
      <div class="bx grow">
        <i class="grip"></i>
        <button aria-label="文字样式"><svg class="ic"><use href="#textstyle"/></svg></button>
        <label class="combo style"><select aria-label="文字样式"><option>Standard</option></select><i class="car dim"></i></label>
        <i class="sep"></i>
        <button aria-label="标注样式"><svg class="ic"><use href="#dimstyle"/></svg></button>
        <label class="combo iso"><select aria-label="标注样式"><option>ISO-25</option></select></label>
      </div>
    </div>
    <div class="row">
      <div class="bx">
        <i class="grip"></i>
        <label class="combo ws"><select aria-label="工作空间"><option>AutoCAD 经典-自定义</option></select><i class="car dim"></i></label>
        <button aria-label="工作空间设置"><svg class="ic"><use href="#gear"/></svg></button><button aria-label="我的工作空间"><svg class="ic"><use href="#myws"/></svg></button>
      </div>
      <div class="bx">
        <i class="grip"></i>
        <button aria-label="图层特性"><svg class="ic"><use href="#layers"/></svg></button>
        <label class="combo lay"><svg class="im"><use href="#bulb"/></svg><svg class="im"><use href="#sun"/></svg><svg class="im"><use href="#vpfreeze"/></svg><svg class="im"><use href="#lock"/></svg><i class="sw"></i><select aria-label="图层"><option>0</option></select><i class="car dim"></i></label>
        <button aria-label="置为当前"><svg class="ic"><use href="#laycur"/></svg></button><button aria-label="上一个图层"><svg class="ic"><use href="#layprev"/></svg></button><button aria-label="图层状态"><svg class="ic"><use href="#laystate"/></svg></button>
      </div>
      <div class="bx">
        <i class="grip"></i>
        <label class="combo color"><i class="sw"></i><select aria-label="颜色"><option>ByLayer</option></select><i class="car dim"></i></label>
      </div>
      <div class="bx grow"><button class="combo ltype" aria-label="线型"><i></i></button></div>
    </div>
    <main class="main">
      <div class="col">
        <div class="vb">
          <i class="hgrip"></i>
          <button aria-label="删除"><svg class="ic"><use href="#erase"/></svg></button><button aria-label="复制"><svg class="ic"><use href="#mcopy"/></svg></button><button aria-label="镜像"><svg class="ic"><use href="#mirror"/></svg></button><button aria-label="偏移"><svg class="ic"><use href="#offset"/></svg></button><button aria-label="阵列"><svg class="ic"><use href="#array"/></svg></button><button aria-label="移动"><svg class="ic"><use href="#move"/></svg></button><button aria-label="旋转"><svg class="ic"><use href="#rotate"/></svg></button><button aria-label="缩放"><svg class="ic"><use href="#scale"/></svg></button><button aria-label="拉伸"><svg class="ic"><use href="#stretch"/></svg></button><button aria-label="修剪"><svg class="ic"><use href="#trim"/></svg></button><button aria-label="延伸"><svg class="ic"><use href="#extend"/></svg></button><button aria-label="打断于点"><svg class="ic"><use href="#breakpt"/></svg></button><button aria-label="打断"><svg class="ic"><use href="#break"/></svg></button><button aria-label="合并"><svg class="ic"><use href="#join"/></svg></button><button aria-label="倒角"><svg class="ic"><use href="#chamfer"/></svg></button><button aria-label="圆角"><svg class="ic"><use href="#fillet"/></svg></button><button aria-label="光顺曲线"><svg class="ic"><use href="#blend"/></svg></button><button aria-label="分解"><svg class="ic"><use href="#explode"/></svg></button>
        </div>
        <div class="vb">
          <i class="hgrip"></i>
          <button aria-label="前置"><svg class="ic"><use href="#ord1"/></svg></button><button aria-label="后置"><svg class="ic"><use href="#ord2"/></svg></button><button aria-label="置于对象之上"><svg class="ic"><use href="#ord3"/></svg></button><button aria-label="置于对象之下"><svg class="ic"><use href="#ord1"/></svg></button>
        </div>
      </div>
      <div class="col">
        <div class="vb">
          <i class="hgrip"></i>
          <button aria-label="直线"><svg class="ic"><use href="#line"/></svg></button><button aria-label="构造线"><svg class="ic"><use href="#xline"/></svg></button><button aria-label="多段线"><svg class="ic"><use href="#pline"/></svg></button><button aria-label="多边形"><svg class="ic"><use href="#polygon"/></svg></button><button aria-label="矩形"><svg class="ic"><use href="#rect"/></svg></button><button aria-label="圆弧"><svg class="ic"><use href="#arc"/></svg></button><button aria-label="圆"><svg class="ic"><use href="#circle"/></svg></button><button aria-label="修订云线"><svg class="ic"><use href="#cloud"/></svg></button><button aria-label="样条曲线"><svg class="ic"><use href="#spline"/></svg></button><button aria-label="椭圆"><svg class="ic"><use href="#ellipse"/></svg></button><button aria-label="椭圆弧"><svg class="ic"><use href="#earc"/></svg></button><button aria-label="插入块"><svg class="ic"><use href="#insert"/></svg></button><button aria-label="创建块"><svg class="ic"><use href="#block"/></svg></button><button aria-label="点"><svg class="ic"><use href="#point"/></svg></button><button aria-label="图案填充"><svg class="ic"><use href="#hatch"/></svg></button><button aria-label="渐变色"><svg class="ic"><use href="#gradient"/></svg></button><button aria-label="面域"><svg class="ic"><use href="#region"/></svg></button><button aria-label="表格"><svg class="ic"><use href="#table"/></svg></button><button aria-label="多行文字"><svg class="ic"><use href="#mtext"/></svg></button><button aria-label="添加选定对象"><svg class="ic"><use href="#addsel"/></svg></button>
        </div>
      </div>
      <section class="view">
        <div class="canvas">
          <svg class="draw" viewBox="0 0 762 472" preserveAspectRatio="none"><path d="M200 276.500L714 263L762 262.500" fill="none" stroke="#eef2f4" stroke-width="1.300"/><path d="M714 262.500h48M746.500 230v65" stroke="#eef2f4"/></svg>
          <span class="vlabel">[−][俯视][二维线框]</span>
          <svg class="ucs" width="84" height="76"><path d="M5.500 16v50H56" fill="none" stroke="#eee" stroke-width="1.500"/><path d="M1.500 61.500h9v9h-9z" fill="none" stroke="#eee"/><path d="M7 0l6 6 6-6M13 6v7M60 52l13 12M73 52L60 64" fill="none" stroke="#eee" stroke-width="1.200"/></svg>
          <div class="cube">
            <span class="n">北</span><span class="w-dir">西</span>
            <svg width="82" height="82"><circle cx="41" cy="41" r="36" fill="none" stroke="#474c55" stroke-width="8"/><path fill="#b9bcc0" stroke="#d1d3d5" d="M24 24h34v34H24z"/><path fill="#a6abb2" d="M29 29h23v23H29z"/><path d="M40.500 33v15" stroke="#404754" stroke-width="2"/><path d="M46 38.500h2M49.500 34v3M46 46.500h4" stroke="#404754"/></svg>
            <span class="e">东</span><span class="s">南</span>
          </div>
          <button class="wcs">WCS <i></i></button>
        </div>
        <div class="vs"><button aria-label="向上"><i class="car up"></i></button><i class="thumb"></i><span></span><button aria-label="向下"><i class="car blk"></i></button></div>
        <div class="hs"><button aria-label="向左"><i class="car left"></i></button><span></span><i class="thumb"></i><button aria-label="向右"><i class="car rblk"></i></button></div>
      </section>
      <div class="col right">
        <div class="vb">
          <i class="hgrip"></i>
          <button aria-label="临时追踪点"><svg class="ic"><use href="#s1"/></svg></button><button aria-label="捕捉自"><svg class="ic"><use href="#s2"/></svg></button><i class="hsep"></i>
          <button aria-label="端点"><svg class="ic"><use href="#s3"/></svg></button><button aria-label="中点"><svg class="ic"><use href="#s4"/></svg></button><button aria-label="交点"><svg class="ic"><use href="#s5"/></svg></button><button aria-label="外观交点"><svg class="ic"><use href="#s5"/></svg></button><button aria-label="延长线"><svg class="ic"><use href="#s6"/></svg></button><i class="hsep"></i>
          <button aria-label="圆心"><svg class="ic"><use href="#s7"/></svg></button><button aria-label="象限点"><svg class="ic"><use href="#s8"/></svg></button><button aria-label="切点"><svg class="ic"><use href="#s9"/></svg></button><i class="hsep"></i>
          <button aria-label="垂足"><svg class="ic"><use href="#s10"/></svg></button><button aria-label="平行线"><svg class="ic"><use href="#s11"/></svg></button><button aria-label="插入点"><svg class="ic"><use href="#s12"/></svg></button><button aria-label="节点"><svg class="ic"><use href="#s13"/></svg></button><i class="hsep"></i>
          <button aria-label="最近点"><svg class="ic"><use href="#s14"/></svg></button><button aria-label="无捕捉"><svg class="ic"><use href="#s15"/></svg></button><i class="hsep"></i>
          <button aria-label="捕捉设置"><svg class="ic"><use href="#s16"/></svg></button>
        </div>
      </div>
    </main>
    <section class="cmd">
      <div class="cmdside"><i class="hgrip"></i><button aria-label="关闭"><svg width="12" height="12"><path d="M2 2l8 8M10 2l-8 8" stroke="#eee" stroke-width="2"/></svg></button><button aria-label="自定义"><svg class="im"><use href="#wrench"/></svg></button></div>
      <div class="cmdbody">
        <div class="hist"><p>&gt;&gt;按 Esc 或 Enter 键退出, 或单击右键显示快捷菜单。</p><p>正在恢复执行 LINE 命令。</p></div>
        <label class="prompt"><svg width="18" height="18"><path d="M2 16L16 2" stroke="#8fb0ca" stroke-dasharray="3 1"/></svg><i class="car dim"></i><strong>LINE</strong><span>指定下一点或 [<em>放弃(<u>U</u>)</em>]:</span><input type="text" aria-label="命令"></label>
      </div>
    </section>
    <footer class="foot">
      <div class="frow">
        <div class="lay-tabs"><button class="lt on"><span>模型</span></button><button class="lt"><span>布局1</span></button><button class="lt"><span>布局2</span></button><button class="lt p" aria-label="新建布局"><span>+</span></button></div>
        <div class="st">
          <div class="g"><button class="coord">9102.1240, 1333.0889, 0.0000</button></div>
          <div class="g"><button class="txt bold">模型</button></div>
          <div class="g wide1"><button aria-label="栅格"><svg class="ic"><use href="#grid"/></svg></button><button aria-label="捕捉"><svg class="ic"><use href="#snap"/></svg></button><button class="tiny" aria-label="捕捉选项"><i class="car"></i></button></div>
          <div class="g"><button aria-label="推断约束"><svg class="ic"><use href="#dyn"/></svg></button></div>
          <div class="g"><button aria-label="动态输入"><svg class="ic"><use href="#dinput"/></svg></button></div>
          <div class="g last1"><button aria-label="正交"><svg class="ic"><use href="#ortho"/></svg></button><button aria-label="极轴"><svg class="ic"><use href="#polar"/></svg></button><button class="tiny" aria-label="极轴选项"><i class="car"></i></button><button aria-label="等轴测"><svg class="ic"><use href="#iso"/></svg></button><button class="tiny" aria-label="等轴测选项"><i class="car"></i></button></div>
        </div>
      </div>
      <div class="frow end">
        <div class="st second">
          <div class="g"><button class="on" aria-label="对象捕捉追踪"><svg class="ic"><use href="#infer"/></svg></button><button class="on" aria-label="对象捕捉"><svg class="ic"><use href="#osnap"/></svg></button><button class="tiny" aria-label="捕捉选项"><i class="car"></i></button></div>
          <div class="g"><button aria-label="线宽"><svg class="ic"><use href="#lweight"/></svg></button></div>
          <div class="g"><button aria-label="透明度"><svg class="ic"><use href="#transp"/></svg></button></div>
          <div class="g"><button aria-label="选择循环"><svg class="ic"><use href="#selcyc"/></svg></button></div>
          <div class="g"><button aria-label="三维对象捕捉"><svg class="ic"><use href="#box3d"/></svg></button><button class="tiny" aria-label="三维选项"><i class="car"></i></button></div>
          <div class="g"><button aria-label="动态 UCS"><svg class="ic"><use href="#ducs"/></svg></button><button aria-label="选择过滤"><svg class="ic"><use href="#filter"/></svg></button><button class="tiny" aria-label="过滤选项"><i class="car"></i></button><button class="on" aria-label="小控件"><svg class="ic"><use href="#gizmo"/></svg></button><button class="tiny" aria-label="小控件选项"><i class="car"></i></button></div>
          <div class="g"><button class="on" aria-label="注释可见性"><svg class="ic"><use href="#annovis"/></svg></button><button aria-label="自动缩放"><svg class="ic"><use href="#annoauto"/></svg></button><button aria-label="注释比例"><svg class="ic"><use href="#anno"/></svg></button><button class="txt">1:1 / 100%</button><button class="tiny" aria-label="比例选项"><i class="car"></i></button></div>
          <div class="g"><button aria-label="切换工作空间"><svg class="ic"><use href="#gear"/></svg></button><button class="tiny" aria-label="工作空间选项"><i class="car"></i></button></div>
          <div class="g"><button aria-label="注释监视器"><svg class="ic"><use href="#plus"/></svg></button></div>
          <div class="g units"><button aria-label="单位"><svg class="ic"><use href="#ruler"/></svg></button><button class="txt bold">小数</button><button class="tiny" aria-label="单位选项"><i class="car"></i></button></div>
          <div class="g"><button aria-label="快捷特性"><svg class="ic"><use href="#qprops"/></svg></button></div>
          <div class="g"><button aria-label="锁定界面"><svg class="ic"><use href="#uilock"/></svg></button><button class="tiny" aria-label="锁定选项"><i class="car"></i></button></div>
          <div class="g"><button aria-label="隔离对象"><svg class="ic"><use href="#isolate"/></svg></button></div>
          <div class="g"><button class="on" aria-label="硬件加速"><svg class="ic"><use href="#hwacc"/></svg></button></div>
          <div class="g"><button aria-label="全屏显示"><svg class="ic"><use href="#clean"/></svg></button></div>
          <div class="g"><button aria-label="自定义"><svg class="ic"><use href="#menu"/></svg></button></div>
        </div>
      </div>
    </footer>
  </div>
  <div class="mark"><b>头条</b> @推优创意</div>
</div>
</body>
</html>
```
FILE: styles.css
```css
* { box-sizing: border-box; }
body { margin: 0; background: #fff; font: 12px/16px "Noto Sans", "Noto Sans CJK SC", sans-serif; color: #eee; }
button { border: 0; padding: 0; margin: 0; background: none; font: inherit; color: inherit; display: flex; align-items: center; justify-content: center; flex: none; white-space: nowrap; }
input, select { font: inherit; color: inherit; border: 0; padding: 0; margin: 0; background: none; appearance: none; outline: 0; min-width: 0; }
a { color: inherit; text-decoration: none; }
i, em { font-style: normal; }
.defs { position: absolute; width: 0; height: 0; }

.w, .w15, .w2 { fill: none; stroke: #dedede; }
.w15 { stroke-width: 1.500; }
.w2 { stroke-width: 2; }
.b, .b2 { fill: none; stroke: #6db3e6; stroke-width: 1.200; }
.b2 { stroke-width: 2; }
.o { fill: none; stroke: #efb48c; stroke-width: 1.200; }
.k { fill: none; stroke: #5a5a5a; }
.wf { fill: #e6e6e6; }
.bf { fill: #6db8ee; }
.kf { fill: #5a5a5a; }
.ic { width: 20px; height: 20px; display: block; flex: none; }
.im { width: 18px; height: 18px; display: block; flex: none; }

.car { width: 0; height: 0; flex: none; border: 4px solid transparent; border-top-color: #fff; border-bottom: 0; }
.car.dim { border-top-color: #a3a3a3; }
.car.blk { border-width: 4px 3px 0; border-top-color: #222; }
.car.up { border: 3px solid transparent; border-bottom: 4px solid #222; border-top: 0; }
.car.left { border: 3px solid transparent; border-right: 4px solid #222; border-left: 0; }
.car.rblk { border: 3px solid transparent; border-left: 4px solid #222; border-right: 0; }
.car.right { border: 4px solid transparent; border-left: 5px solid #fff; border-right: 0; }

.frame { position: relative; display: flex; flex-direction: column; height: 100vh; min-height: 480px; border: 1px solid #666; border-radius: 8px; padding: 7px 6px; background: #fff; overflow: hidden; }
.winbtns { position: absolute; top: 0; right: 6px; display: flex; border: 1px solid #8b8b8b; border-top: 0; border-radius: 0 0 5px 5px; }
.winbtns button { width: 27px; height: 19px; border-right: 1px solid #aaa; }
.winbtns .wide { width: 46px; border-right: 0; }

.head { display: grid; grid-template-columns: 41px 1fr; grid-template-rows: 24px 21px; padding: 0 1px; flex: none; }
.appbtn { grid-row: 1 / 3; grid-column: 1; height: 41px; border: 1px solid #111; background: linear-gradient(#8d8d8d, #c2c2c2 50%, #777); z-index: 1; }
.title { grid-row: 1; grid-column: 2; display: flex; padding-right: 122px; min-width: 0; }
.qat { display: flex; align-items: center; width: 122px; height: 23px; padding-left: 5px; background: linear-gradient(#a5a5a5, #7c7c7c); border-top: 1px solid #666; border-right: 1px solid #777; flex: none; }
.qat button { width: 24px; }
.qat button:last-child { width: 18px; }
h1 { flex: 1; margin: 0; font-size: 12px; font-weight: 400; line-height: 16px; color: #111; padding-right: 8px; text-align: right; white-space: nowrap; }
.info { display: flex; align-items: center; width: 447px; height: 23px; background: linear-gradient(#9b9b9b, #868686); border-top: 1px solid #555; flex: none; }
.info button { width: 24px; }
.info .exp { width: 13px; }
.search { width: 180px; height: 22px; padding-left: 5px; background: #777; border: 1px solid #444; font-style: italic; }
.search::placeholder { color: #ccc; opacity: 1; }
.info .login { width: 48px; justify-content: space-between; margin-right: 56px; }
.info .tiny { width: 14px; }
.info .tiny .car { border-width: 3px 3px 0; }
.bar { width: 1px; height: 16px; background: #999; margin: 0 5px; }

.menu { display: flex; align-items: center; gap: 24px; grid-column: 1 / 3; grid-row: 2; height: 21px; padding: 0 4px 0 55px; background: linear-gradient(#777, #6c6c6c 30%, #808080); border-top: 1px solid #555; white-space: nowrap; color: #fff; }
.mdi { display: flex; gap: 5px; margin-left: auto; }

.app { flex: 1; min-height: 0; display: flex; flex-direction: column; background: #5c5c5c; border: 1px solid #777; border-top: 0; }
.tabs { display: flex; height: 26px; padding: 3px 0 1px 18px; background: #363636; flex: none; }
.tab { position: relative; height: 22px; color: #b0b0b0; }
.tab::before, .tab::after { content: ""; position: absolute; top: 0; bottom: 0; background: linear-gradient(#5a5a5a, #515151); }
.tab::before { left: 4px; right: 50%; border-radius: 7px 0 0 0; transform: skewX(-22deg); }
.tab::after { right: 4px; left: 40%; border-radius: 0 7px 0 0; transform: skewX(22deg); }
.tab span, .tab b { position: relative; z-index: 1; }
.tab b { margin-left: auto; font-size: 15px; color: #303030; }
.start { width: 134px; justify-content: flex-start; padding-left: 14px; }
.doc { width: 204px; padding: 0 15px 0 12px; margin-left: -8px; }
.cur { width: 142px; padding: 0 22px 0 17px; margin-left: -10px; color: #fff; z-index: 2; }
.cur::before, .cur::after { background: linear-gradient(#707070, #5e5e5e); }
.tab.add { width: 30px; height: 16px; margin: 4px 0 0 -6px; font-size: 17px; color: #ddd; }
.tab.add::before { border-radius: 4px 0 0 4px; transform: skewX(16deg); }
.tab.add::after { border-radius: 0 4px 4px 0; transform: skewX(16deg); }

.row { display: flex; gap: 2px; height: 27px; padding-top: 2px; flex: none; overflow: hidden; background: #4b4b4b; border-top: 1px solid #666; }
.bx { display: flex; align-items: center; height: 24px; background: #5c5c5c; flex: none; }
.bx.grow { flex: 1 1 0; min-width: 0; overflow: hidden; }
.bx button { width: 23px; height: 24px; }
.bx .tiny, .bx button.tiny { width: 12px; }
.grip { width: 5px; height: 16px; margin: 0 1px 0 2px; background: repeating-linear-gradient(90deg, transparent 0 1px, #5c5c5c 1px 2px), repeating-linear-gradient(#1c1c1c 0 1px, transparent 1px 2px); flex: none; }
.sep { width: 1px; height: 18px; margin: 0 3px 0 2px; background: #2d2d2d; flex: none; }
.combo { display: flex; align-items: center; height: 24px; background: #f2f2f2; border: 1px solid #ddd; color: #666; padding: 0 4px; flex: none; }
.combo select { flex: 1; }
.style { width: 120px; padding-left: 18px; }
.iso { width: 60px; padding-left: 18px; }
.ws { width: 175px; padding: 0 3px 0 8px; }
.lay { width: 299px; gap: 1px; padding-left: 2px; }
.lay select { padding-left: 4px; }
.sw { width: 14px; height: 14px; border: 1px solid #111; background: #fff; flex: none; }
.color { width: 150px; gap: 4px; padding-left: 1px; }
.bx .ltype { flex: 1; width: auto; margin-left: 2px; }
.ltype i { width: 100%; height: 1px; background: #111; }

.main { flex: 1; min-height: 0; display: flex; padding: 4px 3px 0 0; }
.col { width: 25px; margin-right: 3px; overflow: hidden; flex: none; }
.col.right { margin: 0 0 0 4px; }
.vb { display: flex; flex-direction: column; border: 1px solid #3c3c3c; border-bottom-width: 2px; margin-bottom: 1px; }
.hgrip { width: 15px; height: 5px; margin: 1px 0 2px 3px; background: repeating-linear-gradient(transparent 0 1px, #5c5c5c 1px 2px), repeating-linear-gradient(90deg, #1c1c1c 0 1px, transparent 1px 2px); flex: none; }
.vb button { height: 22px; width: 21px; }
.hsep { height: 2px; margin: 2px 2px; background: #eee; }
.view { flex: 1; min-width: 0; margin-left: 1px; display: grid; grid-template: 1fr 17px / 1fr 17px; background: #f0f0f0; }
.canvas { position: relative; background: #212830; overflow: hidden; }
.draw { position: absolute; inset: 0; width: 100%; height: 100%; }
.vlabel { position: absolute; left: 3px; top: 6px; }
.ucs { position: absolute; left: 8px; bottom: 0; height: 80px; }
.cube { position: absolute; right: 9px; top: 10px; width: 90px; height: 92px; color: #c4c6c9; }
.cube svg { position: absolute; left: 2px; top: 4px; }
.cube span { position: absolute; z-index: 1; }
.n { left: 37px; top: 0; }
.s { left: 37px; bottom: 0; }
.w-dir { left: 0; top: 38px; }
.e { right: 2px; top: 38px; }
.wcs { position: absolute; right: 32px; top: 113px; width: 48px; height: 18px; border: 1px solid #c3c5d0; border-radius: 4px; background: #9da1ad; color: #444955; font: 11px "Liberation Sans", sans-serif; gap: 4px; }
.wcs i { border: 4px solid transparent; border-top-color: #c8cad6; border-bottom: 0; }
.vs { display: flex; flex-direction: column; grid-row: 1; grid-column: 2; }
.vs span, .hs span { flex: 1; }
.vs button { height: 17px; width: 17px; }
.hs { display: flex; }
.hs button { width: 17px; height: 17px; }
.thumb { width: 15px; height: 15px; margin: 1px; border: 1px solid #888; background: linear-gradient(#fff, #ccc); flex: none; }

.cmd { display: flex; flex: none; margin-top: 2px; color: #111; }
.cmdside { width: 25px; display: flex; flex-direction: column; align-items: center; gap: 5px; background: linear-gradient(#777, #3a3a3a); padding-top: 3px; }
.cmdside .hgrip { background: repeating-linear-gradient(transparent 0 1px, #6f6f6f 1px 2px), repeating-linear-gradient(90deg, #bbb 0 1px, transparent 1px 2px); margin: 0 0 2px; }
.cmdbody { flex: 1; border: 1px solid #777; font-family: "DejaVu Sans Mono", "Noto Sans CJK SC", monospace; }
.hist { background: #c8c8c8; padding: 1px 2px 0; border-bottom: 1px solid #777; }
.hist p { margin: 0; }
.prompt { display: flex; align-items: center; height: 22px; background: #fff; padding-left: 3px; }
.prompt .car { border-width: 3px 3px 0; margin: 0 7px 0 2px; }
.prompt strong { margin-right: 5px; }
.prompt em { background: #ccc; border-radius: 3px; padding: 1px 0; }
.prompt u { color: #2416d8; text-decoration: none; }
.prompt input { flex: 1; }

.foot { background: #363636; flex: none; }
.frow { display: flex; justify-content: space-between; height: 28px; }
.frow.end { justify-content: flex-end; }
.lay-tabs { display: flex; height: 18px; padding-left: 8px; }
.lt { position: relative; width: 60px; height: 18px; margin-right: -8px; color: #aaa; }
.lt::before, .lt::after { content: ""; position: absolute; top: 0; bottom: 0; background: #555; }
.lt::before { left: 4px; right: 50%; transform: skewX(22deg); border-radius: 0 0 0 7px; }
.lt::after { right: 4px; left: 45%; transform: skewX(-22deg); border-radius: 0 0 7px 0; }
.lt span { position: relative; z-index: 1; }
.lt.on { color: #fff; z-index: 1; font-weight: 700; }
.lt.on::before, .lt.on::after { background: linear-gradient(#666, #8a8a8a); }
.lt.p { width: 36px; font-size: 16px; }
.lt.p::before { transform: skewX(-22deg); left: 8px; }
.st { display: flex; border: 1px solid #7b7b7b; background: #4a4a4a; width: 434px; height: 28px; padding: 1px; }
.st.second { width: 777px; }
.g { display: flex; align-items: center; justify-content: center; flex: 1 1 auto; border-right: 1px solid #777; color: #fff; }
.g:last-child { border-right: 0; }
.g button { width: 23px; height: 24px; }
.g .tiny, .g button.tiny { width: 15px; }
.g .on { background: #5d8dc4; border: 1px solid #6fa0d5; }
.g .coord { width: auto; padding: 0 6px; }
.g .txt { width: auto; padding: 0 4px; }
.bold { font-weight: 500; }
.g.units { flex: 0 0 98px; }
.units .txt { margin-right: auto; }
.mark { position: absolute; right: 20px; bottom: 16px; z-index: 5; color: #fff; font: 23px/32px "Noto Sans CJK SC", sans-serif; text-shadow: 1px 1px 2px #000, 0 0 2px #222; white-space: nowrap; pointer-events: none; }
.mark b { font-weight: 900; }
```
